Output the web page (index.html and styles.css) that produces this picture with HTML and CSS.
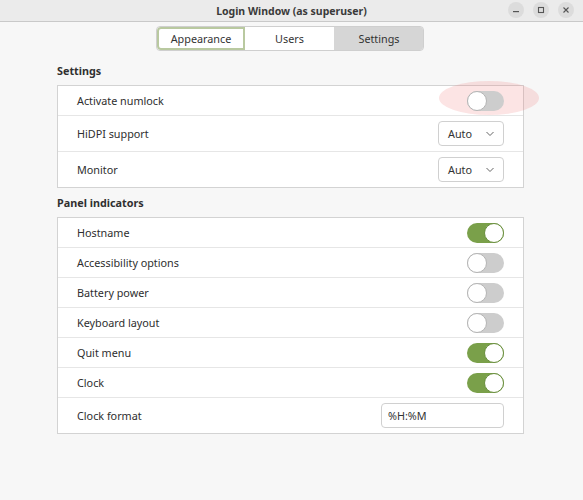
FILE: index.html
```html
<!DOCTYPE html>
<html>
<head>
<meta charset="utf-8">
<link rel="stylesheet" href="styles.css">
</head>
<body>
<div class="window">
  <div class="titlebar">
    <div class="title">Login Window (as superuser)</div>
    <div class="controls">
      <span class="wbtn"><svg width="16" height="16" viewBox="0 0 16 16"><rect x="5" y="9" width="6" height="1.2" fill="#555"/></svg></span>
      <span class="wbtn"><svg width="16" height="16" viewBox="0 0 16 16"><rect x="5.5" y="5.5" width="5" height="5" fill="none" stroke="#555" stroke-width="1.1"/></svg></span>
      <span class="wbtn"><svg width="16" height="16" viewBox="0 0 16 16"><path d="M5.5 5.5 L10.5 10.5 M10.5 5.5 L5.5 10.5" stroke="#555" stroke-width="1.1"/></svg></span>
    </div>
  </div>
  <div class="content">
    <div class="switcher">
      <div class="tab tab-focus">Appearance</div>
      <div class="tab">Users</div>
      <div class="tab tab-active">Settings</div>
    </div>

    <div class="section">
      <div class="heading">Settings</div>
      <div class="frame">
        <div class="row">
          <span class="label">Activate numlock</span>
          <span class="highlight"></span>
          <span class="switch"><span class="knob"></span></span>
        </div>
        <div class="row row-tall">
          <span class="label">HiDPI support</span>
          <span class="combo">Auto<svg width="10" height="6" viewBox="0 0 10 6"><path d="M1.5 1 L5 4.5 L8.5 1" fill="none" stroke="#666" stroke-width="1"/></svg></span>
        </div>
        <div class="row row-tall">
          <span class="label">Monitor</span>
          <span class="combo">Auto<svg width="10" height="6" viewBox="0 0 10 6"><path d="M1.5 1 L5 4.5 L8.5 1" fill="none" stroke="#666" stroke-width="1"/></svg></span>
        </div>
      </div>
    </div>

    <div class="section section2">
      <div class="heading">Panel indicators</div>
      <div class="frame">
        <div class="row"><span class="label">Hostname</span><span class="switch on"><span class="knob"></span></span></div>
        <div class="row"><span class="label">Accessibility options</span><span class="switch"><span class="knob"></span></span></div>
        <div class="row"><span class="label">Battery power</span><span class="switch"><span class="knob"></span></span></div>
        <div class="row"><span class="label">Keyboard layout</span><span class="switch"><span class="knob"></span></span></div>
        <div class="row"><span class="label">Quit menu</span><span class="switch on"><span class="knob"></span></span></div>
        <div class="row"><span class="label">Clock</span><span class="switch on"><span class="knob"></span></span></div>
        <div class="row row-tall"><span class="label">Clock format</span><span class="entry">%H:%M</span></div>
      </div>
    </div>
  </div>
</div>
</body>
</html>
```

FILE: styles.css
```css
* { box-sizing: border-box; }
html, body { margin: 0; padding: 0; }
body {
  width: 583px;
  height: 500px;
  background: #f7f7f7;
  font-family: "Noto Sans", "DejaVu Sans", sans-serif;
  font-size: 10.8px;
  color: #2e2e2e;
  overflow: hidden;
}
.titlebar {
  height: 22px;
  background: #ebebeb;
  border-bottom: 1px solid #c9c9c9;
  display: flex;
  align-items: center;
  justify-content: center;
  position: relative;
}
.title {
  font-weight: bold;
  font-size: 10.5px;
  color: #3a3a3a;
}
.controls {
  position: absolute;
  right: 9px;
  top: 2px;
  display: flex;
  gap: 9px;
}
.wbtn {
  width: 16px;
  height: 16px;
  border-radius: 50%;
  background: #dcdcdc;
  display: flex;
}
.content {
  display: flex;
  flex-direction: column;
}
.switcher {
  display: flex;
  align-self: center;
  margin-top: 4px;
  margin-right: 3px;
  border: 1px solid #cfcfcf;
  border-radius: 4px;
  overflow: hidden;
  height: 25px;
}
.tab {
  display: flex;
  align-items: center;
  justify-content: center;
  background: #ffffff;
  color: #333;
  border-right: 1px solid #d6d6d6;
}
.tab:nth-child(1) { width: 88px; }
.tab:nth-child(2) { width: 90px; }
.tab:nth-child(3) { width: 88px; border-right: none; }
.tab-focus {
  border: 2px solid #b9c9a0;
  border-radius: 4px 0 0 4px;
}
.tab-active { background: #d6d6d6; }
.section {
  margin-left: 57px;
  width: 467px;
  margin-top: 11px;
}
.section2 { margin-top: 6px; }
.heading {
  font-weight: bold;
  height: 23px;
  line-height: 18px;
  color: #303030;
}
.frame {
  background: #ffffff;
  border: 1px solid #d3d3d3;
}
.row {
  height: 30px;
  display: flex;
  align-items: center;
  justify-content: space-between;
  padding: 0 19px 0 19px;
  border-top: 1px solid #e6e6e6;
  position: relative;
}
.row:first-child { border-top: none; height: 29px; }
.row-tall { height: 36px; }
.label { color: #2e2e2e; }
.switch {
  width: 37px;
  height: 20px;
  border-radius: 10px;
  background: #cdcdcd;
  position: relative;
  display: block;
}
.switch .knob {
  position: absolute;
  left: 0;
  top: 0;
  width: 20px;
  height: 20px;
  border-radius: 50%;
  background: #ffffff;
  border: 1px solid #b4b4b4;
}
.switch.on { background: #7aa04a; }
.switch.on .knob {
  left: auto;
  right: 0;
  border: 1px solid #6a8f3e;
}
.highlight {
  position: absolute;
  left: 381px;
  top: -5px;
  width: 100px;
  height: 34px;
  border-radius: 50%;
  background: rgba(240, 120, 120, 0.2);
}
.combo {
  width: 66px;
  height: 25px;
  border: 1px solid #d0d0d0;
  border-radius: 4px;
  background: #ffffff;
  display: flex;
  align-items: center;
  justify-content: space-between;
  padding: 0 8px 0 9px;
  color: #333;
}
.entry {
  width: 123px;
  height: 25px;
  border: 1px solid #d0d0d0;
  border-radius: 4px;
  background: #ffffff;
  display: flex;
  align-items: center;
  padding-left: 6px;
  color: #333;
}
```
